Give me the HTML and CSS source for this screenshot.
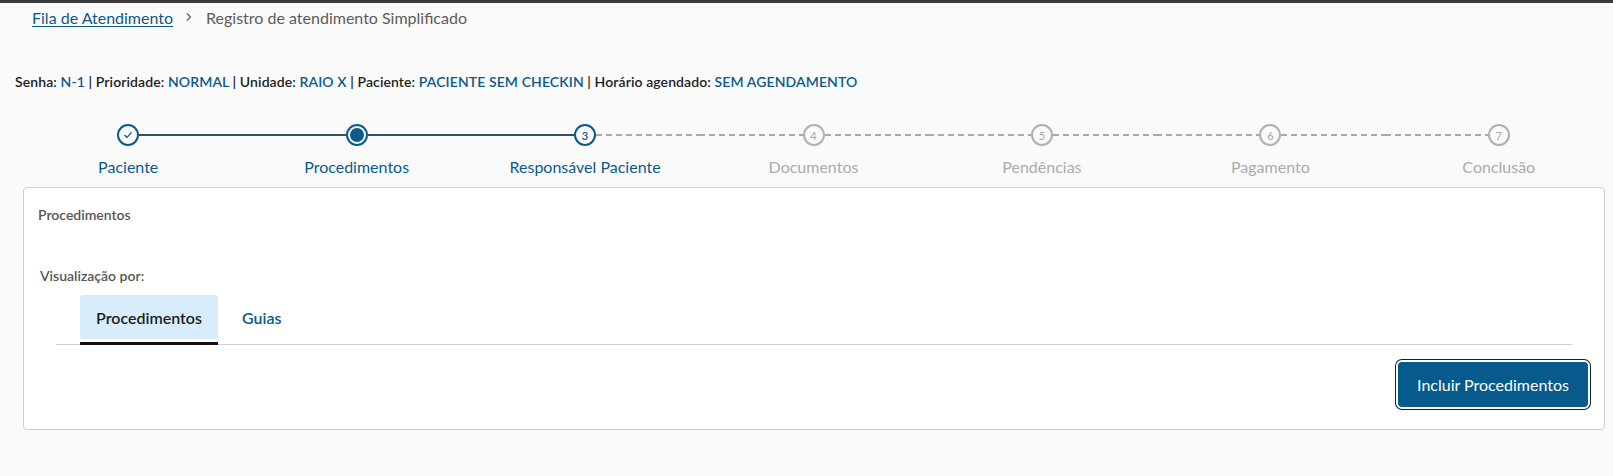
FILE: index.html
```html
<!DOCTYPE html>
<html lang="pt-BR">
<head>
<meta charset="utf-8">
<title>Registro de atendimento Simplificado</title>
<link rel="stylesheet" href="styles.css">
</head>
<body>
<div class="topbar"></div>
<nav class="breadcrumb">
  <a href="#" class="crumb-link">Fila de Atendimento</a>
  <svg class="crumb-sep" width="8" height="10" viewBox="0 0 8 10"><path d="M2 1.5 L5.5 5 L2 8.5" fill="none" stroke="#666" stroke-width="1.3"/></svg>
  <span class="crumb-current">Registro de atendimento Simplificado</span>
</nav>

<div class="info">
  Senha: <span class="val">N-1</span> | Prioridade: <span class="val">NORMAL</span> | Unidade: <span class="val">RAIO X</span> | Paciente: <span class="val">PACIENTE SEM CHECKIN</span> | Horário agendado: <span class="val">SEM AGENDAMENTO</span>
</div>

<div class="stepper">
  <div class="step">
    <div class="track">
      <span class="line none"></span>
      <span class="dot done"><svg width="10" height="8" viewBox="0 0 10 8"><path d="M1.5 4 L4 6.3 L8.5 1.5" fill="none" stroke="#0b5a8a" stroke-width="1.2"/></svg></span>
      <span class="line solid"></span>
    </div>
    <div class="label on">Paciente</div>
  </div>
  <div class="step">
    <div class="track">
      <span class="line solid"></span>
      <span class="dot active"><span class="inner"></span></span>
      <span class="line solid"></span>
    </div>
    <div class="label on">Procedimentos</div>
  </div>
  <div class="step">
    <div class="track">
      <span class="line solid"></span>
      <span class="dot current">3</span>
      <span class="line dashed"></span>
    </div>
    <div class="label on">Responsável Paciente</div>
  </div>
  <div class="step">
    <div class="track">
      <span class="line dashed"></span>
      <span class="dot off">4</span>
      <span class="line dashed"></span>
    </div>
    <div class="label">Documentos</div>
  </div>
  <div class="step">
    <div class="track">
      <span class="line dashed"></span>
      <span class="dot off">5</span>
      <span class="line dashed"></span>
    </div>
    <div class="label">Pendências</div>
  </div>
  <div class="step">
    <div class="track">
      <span class="line dashed"></span>
      <span class="dot off">6</span>
      <span class="line dashed"></span>
    </div>
    <div class="label">Pagamento</div>
  </div>
  <div class="step">
    <div class="track">
      <span class="line dashed"></span>
      <span class="dot off">7</span>
      <span class="line none"></span>
    </div>
    <div class="label">Conclusão</div>
  </div>
</div>

<section class="card">
  <h2 class="card-title">Procedimentos</h2>
  <div class="view-label">Visualização por:</div>
  <div class="tabs">
    <button class="tab selected">Procedimentos</button>
    <button class="tab">Guias</button>
  </div>
  <div class="actions">
    <button class="btn-primary">Incluir Procedimentos</button>
  </div>
</section>
</body>
</html>
```

FILE: styles.css
```css
* { box-sizing: border-box; }

html, body {
  margin: 0;
  padding: 0;
  background: #fafafa;
  font-family: Lato, "Open Sans", "Liberation Sans", sans-serif;
  color: #333;
}

.topbar {
  height: 3px;
  background: #3a3a3a;
}

.breadcrumb {
  display: flex;
  align-items: center;
  height: 28px;
  padding-left: 32px;
  font-size: 16px;
}

.crumb-link {
  color: #0b5a8a;
  text-decoration: underline;
  text-underline-offset: 2px;
}

.crumb-sep {
  margin: 0 13px 0 12px;
}

.crumb-current {
  color: #5c5c5c;
}

.info {
  margin-top: 42px;
  padding-left: 15px;
  font-size: 14px;
  font-weight: 600;
  letter-spacing: 0.1px;
  line-height: 18px;
  color: #222;
}

.info .val {
  color: #0b5a8a;
}

.stepper {
  display: grid;
  grid-template-columns: repeat(7, 1fr);
  margin-left: 14px;
  margin-top: 33px;
}

.step {
  display: flex;
  flex-direction: column;
  align-items: center;
}

.track {
  display: flex;
  align-items: center;
  width: 100%;
  height: 22px;
}

.line {
  flex: 1;
  height: 2px;
}

.line.solid { background: #3c4e5b; }
.line.dashed {
  background: repeating-linear-gradient(to right, #a9a9a9 0 6px, transparent 6px 10px);
}

.dot {
  width: 22px;
  height: 22px;
  border-radius: 50%;
  border: 2px solid #0b5a8a;
  display: flex;
  align-items: center;
  justify-content: center;
  font-size: 11px;
  line-height: 1;
  background: #fafafa;
  flex: none;
}

.dot.current {
  color: #0b5a8a;
  font-weight: 600;
}

.dot.active .inner {
  width: 14px;
  height: 14px;
  border-radius: 50%;
  background: #0b5a8a;
}

.dot.off {
  border-color: #b0b0b0;
  color: #a8a8a8;
}

.label {
  margin-top: 12px;
  font-size: 16px;
  line-height: 18px;
  color: #ababab;
}

.label.on { color: #0b5a8a; }

.card {
  margin: 11px 8px 0 23px;
  background: #fff;
  border: 1px solid #cfcfcf;
  border-radius: 4px;
  padding: 0 14px 20px 0;
}

.card-title {
  margin: 0;
  padding: 18px 0 0 14px;
  font-size: 14px;
  font-weight: 600;
  line-height: 18px;
  color: #555;
}

.view-label {
  margin-top: 43px;
  padding-left: 16px;
  font-size: 14px;
  font-weight: 600;
  line-height: 18px;
  color: #555;
}

.tabs {
  display: flex;
  margin: 10px 18px 0 32px;
  padding-left: 24px;
  border-bottom: 1px solid #cfcfcf;
  height: 50px;
}

.tab {
  font-family: inherit;
  font-size: 16px;
  font-weight: 600;
  border: none;
  background: transparent;
  color: #0b5a8a;
  padding: 0 16px 0 24px;
  height: 44px;
  margin: 0;
  cursor: pointer;
  border-radius: 3px;
}

.tab.selected {
  background: #d7edfb;
  color: #1e1e1e;
  width: 138px;
  padding: 0;
  position: relative;
}

.tab.selected::after {
  content: "";
  position: absolute;
  left: 0;
  right: 0;
  top: 47px;
  height: 3px;
  background: #111;
}

.actions {
  display: flex;
  justify-content: flex-end;
  margin-top: 15px;
}

.btn-primary {
  font-family: inherit;
  font-size: 16px;
  color: #fff;
  background: #065a8c;
  width: 194px;
  height: 49px;
  border: 2px solid #fff;
  border-radius: 6px;
  box-shadow: 0 0 0 1px #0c1f33;
  cursor: pointer;
}
```
